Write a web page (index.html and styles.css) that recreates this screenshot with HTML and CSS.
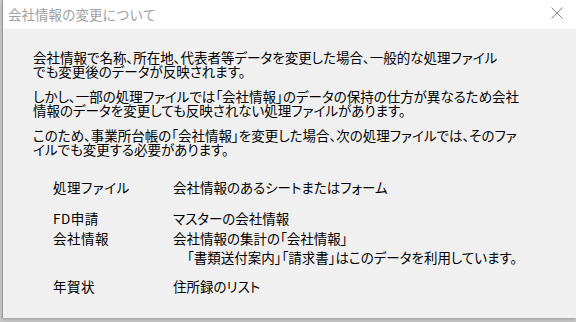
FILE: index.html
```html
<!DOCTYPE html>
<html lang="ja">
<head>
  <meta charset="UTF-8">
  <title>会社情報の変更について</title>
  <link rel="stylesheet" href="styles.css">
</head>
<body>

<div class="dialog">
  <div class="titlebar">
    <span class="title">会社情報の変更について</span>
    <svg class="close" width="12" height="12" viewBox="0 0 12 12">
      <path d="M0.5 0.5 L11.5 11.5 M11.5 0.5 L0.5 11.5" stroke="#8a8a8a" stroke-width="1" fill="none"/>
    </svg>
  </div>

  <div class="content">
    <p class="para">会社情報で名称、所在地、代表者等データを変更した場合、一般的な処理ファイル<br>でも変更後のデータが反映されます。</p>
    <p class="para">しかし、一部の処理ファイルでは「会社情報」のデータの保持の仕方が異なるため会社<br>情報のデータを変更しても反映されない処理ファイルがあります。</p>
    <p class="para">このため、事業所台帳の「会社情報」を変更した場合、次の処理ファイルでは、そのファ<br>イルでも変更する必要があります。</p>

    <div class="files">
      <div class="row head">
        <span class="name">処理ファイル</span>
        <span class="desc">会社情報のあるシートまたはフォーム</span>
      </div>
      <div class="row near">
        <span class="name">FD申請</span>
        <span class="desc">マスターの会社情報</span>
      </div>
      <div class="row">
        <span class="name">会社情報</span>
        <span class="desc">会社情報の集計の「会社情報」<br><span class="note">「書類送付案内」「請求書」はこのデータを利用しています。</span></span>
      </div>
      <div class="row">
        <span class="name">年賀状</span>
        <span class="desc">住所録のリスト</span>
      </div>
    </div>
  </div>
</div>

</body>
</html>
```

FILE: styles.css
```css
html, body {
  margin: 0;
  height: 100%;
}
body {
  background-color: #cdcdcd; /* window behind the dialog */
  font-family: "Noto Sans CJK JP", "Noto Sans", sans-serif;
  overflow: hidden;
}
.dialog {
  margin-left: 2px;
  width: 574px;
  height: 318px;
  border-left: 1px solid #9a9a9a;
  box-sizing: border-box;
  background-color: #f0f0f0;
  box-shadow: 0 2px 4px rgba(0, 0, 0, 0.2);
}
.titlebar {
  height: 29px;
  background-color: #fff;
  display: flex;
  align-items: center;
  justify-content: space-between;
  padding: 0 13px 0 5px;
}
.title {
  font-size: 13.5px;
  color: #a0a0a0;
  margin-top: -2px;
}
.close {
  margin-top: -3px;
}
.content {
  padding: 21px 0 0 30px;
  font-size: 13.5px;
  color: #000;
  font-feature-settings: "palt";
}
.para {
  margin: 0 0 11px 0;
  line-height: 14px;
  white-space: nowrap;
}
.files {
  margin: 22px 0 0 20px;
}
.row {
  display: grid;
  grid-template-columns: 120px auto;
  line-height: 19px;
  margin-bottom: 10px;
}
.row.head {
  margin-bottom: 12px;
}
.row.near {
  margin-bottom: 1px;
}
.name {
  letter-spacing: 0.5px;
}
.note {
  padding-left: 14px;
}
```
